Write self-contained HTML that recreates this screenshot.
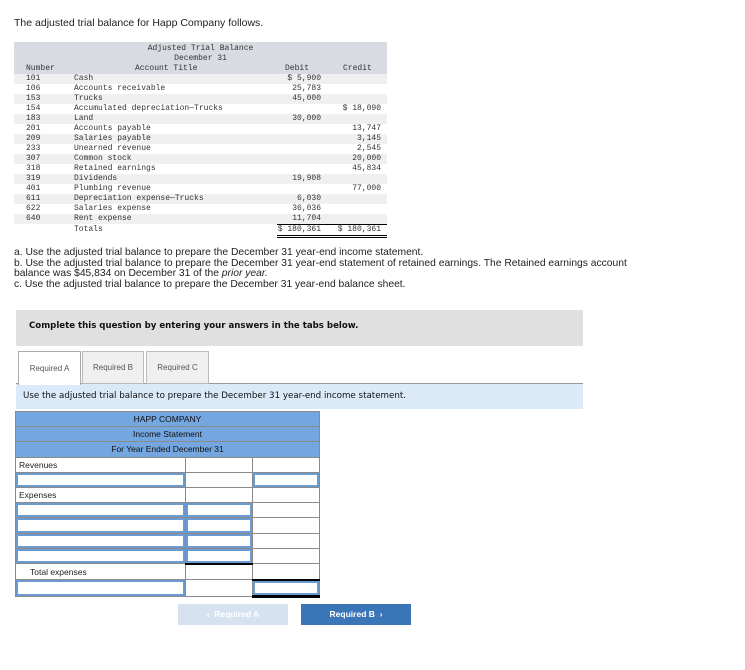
<!DOCTYPE html>
<html><head><style>
body{margin:0;width:745px;height:670px;background:#fff;position:relative;font-family:"Liberation Sans",sans-serif;color:#222;overflow:hidden}
.a{position:absolute;white-space:nowrap}
.tb{position:absolute;left:14px;top:42px;width:373px;font-family:"Liberation Mono",monospace;font-size:8px;color:#333}
.tb .hd{background:#d9dbe3;height:32px;position:relative}
.tb .r{height:10px;position:relative;line-height:10px}
.tb .r:nth-child(odd){background:#f0f0f0}
.tb span{position:absolute}
.n{left:12px}.t{left:60px}.d{right:66px}.c{right:6px}
.is{position:absolute;left:15px;top:411px;border-collapse:collapse;font-size:8.5px}
.is td{border:1px solid #8a8a8a;height:14.2px;padding:0 3px;line-height:14px}
.is .h td{background:#74a7e0;text-align:center;color:#111}
.inp{box-shadow:inset 0 0 0 2px #6c9bd2}
</style></head><body>
<div class="a" style="left:14px;top:17px;font-size:10.5px">The adjusted trial balance for Happ Company follows.</div>
<div class="tb">
<div class="hd">
<span style="left:0;width:373px;text-align:center;top:2px;line-height:10px">Adjusted Trial Balance<br>December 31</span>
<span class="n" style="top:22px">Number</span><span style="left:121px;top:22px">Account Title</span>
<span style="left:271px;top:22px">Debit</span><span style="left:329px;top:22px">Credit</span>
</div>
<div>
<div class="r"><span class="n">101</span><span class="t">Cash</span><span class="d">$ 5,900</span></div>
<div class="r"><span class="n">106</span><span class="t">Accounts receivable</span><span class="d">25,783</span></div>
<div class="r"><span class="n">153</span><span class="t">Trucks</span><span class="d">45,000</span></div>
<div class="r"><span class="n">154</span><span class="t">Accumulated depreciation—Trucks</span><span class="c">$ 18,090</span></div>
<div class="r"><span class="n">183</span><span class="t">Land</span><span class="d">30,000</span></div>
<div class="r"><span class="n">201</span><span class="t">Accounts payable</span><span class="c">13,747</span></div>
<div class="r"><span class="n">209</span><span class="t">Salaries payable</span><span class="c">3,145</span></div>
<div class="r"><span class="n">233</span><span class="t">Unearned revenue</span><span class="c">2,545</span></div>
<div class="r"><span class="n">307</span><span class="t">Common stock</span><span class="c">20,000</span></div>
<div class="r"><span class="n">318</span><span class="t">Retained earnings</span><span class="c">45,834</span></div>
<div class="r"><span class="n">319</span><span class="t">Dividends</span><span class="d">19,908</span></div>
<div class="r"><span class="n">401</span><span class="t">Plumbing revenue</span><span class="c">77,000</span></div>
<div class="r"><span class="n">611</span><span class="t">Depreciation expense—Trucks</span><span class="d">6,030</span></div>
<div class="r"><span class="n">622</span><span class="t">Salaries expense</span><span class="d">36,036</span></div>
<div class="r"><span class="n">640</span><span class="t">Rent expense</span><span class="d">11,704</span></div>
<div class="r" style="height:12px;line-height:12px"><span class="t">Totals</span><span class="d">$ 180,361</span><span class="c">$ 180,361</span>
<div style="position:absolute;left:263px;right:0;top:0;border-top:1px solid #000"></div>
<div style="position:absolute;left:263px;right:0;bottom:-2px;border-top:3px double #000"></div></div>
</div></div>
<div class="a" style="left:14px;top:248px;font-size:10.3px;line-height:10.6px;color:#222">a. Use the adjusted trial balance to prepare the December 31 year-end income statement.<br>b. Use the adjusted trial balance to prepare the December 31 year-end statement of retained earnings. The Retained earnings account<br>balance was $45,834 on December 31 of the <i>prior year.</i><br>c. Use the adjusted trial balance to prepare the December 31 year-end balance sheet.</div>
<div class="a" style="left:16px;top:310px;width:567px;height:36px;background:#e0e0e0"></div>
<div class="a" style="left:29px;top:320px;font-family:'DejaVu Sans',sans-serif;font-size:8.6px;font-weight:bold;line-height:12px;color:#111">Complete this question by entering your answers in the tabs below.</div>
<div class="a" style="left:16px;top:383px;width:567px;height:25px;background:#dbeaf8;border-top:1px solid #999"></div>
<div class="a" style="left:18px;top:351px;width:61px;height:33px;background:#fff;border:1px solid #aaa;border-bottom:none;font-size:8px;text-align:center;line-height:33px;color:#555">Required A</div>
<div class="a" style="left:82px;top:351px;width:60px;height:31px;background:#f0f0f0;border:1px solid #bbb;font-size:8px;text-align:center;line-height:31px;color:#555">Required B</div>
<div class="a" style="left:146px;top:351px;width:61px;height:31px;background:#f0f0f0;border:1px solid #bbb;font-size:8px;text-align:center;line-height:31px;color:#555">Required C</div>
<div class="a" style="left:23px;top:390px;font-family:'DejaVu Sans',sans-serif;font-size:8.7px;line-height:12px;color:#111">Use the adjusted trial balance to prepare the December 31 year-end income statement.</div>
<table class="is">
<tr class="h"><td colspan="3" style="width:296px">HAPP COMPANY</td></tr>
<tr class="h"><td colspan="3">Income Statement</td></tr>
<tr class="h"><td colspan="3">For Year Ended December 31</td></tr>
<tr><td style="width:163px">Revenues</td><td style="width:60px"></td><td style="width:60px"></td></tr>
<tr><td class="inp"></td><td></td><td class="inp"></td></tr>
<tr><td>Expenses</td><td></td><td></td></tr>
<tr><td class="inp"></td><td class="inp"></td><td></td></tr>
<tr><td class="inp"></td><td class="inp"></td><td></td></tr>
<tr><td class="inp"></td><td class="inp"></td><td></td></tr>
<tr><td class="inp"></td><td class="inp" style="border-bottom:2px solid #000"></td><td></td></tr>
<tr><td style="padding-left:14px">Total expenses</td><td></td><td style="border-bottom:2px solid #000"></td></tr>
<tr><td class="inp"></td><td></td><td class="inp" style="border-bottom:3px solid #000"></td></tr>
</table>
<div class="a" style="left:178px;top:604px;width:110px;height:21px;background:#d6e2f0;color:#fff;font-size:8.5px;font-weight:bold;text-align:center;line-height:21px">&lsaquo;&nbsp;&nbsp;Required A</div>
<div class="a" style="left:301px;top:604px;width:110px;height:21px;background:#3a75b8;color:#fff;font-size:8.5px;font-weight:bold;text-align:center;line-height:21px">Required B&nbsp;&nbsp;&rsaquo;</div>
</body></html>
